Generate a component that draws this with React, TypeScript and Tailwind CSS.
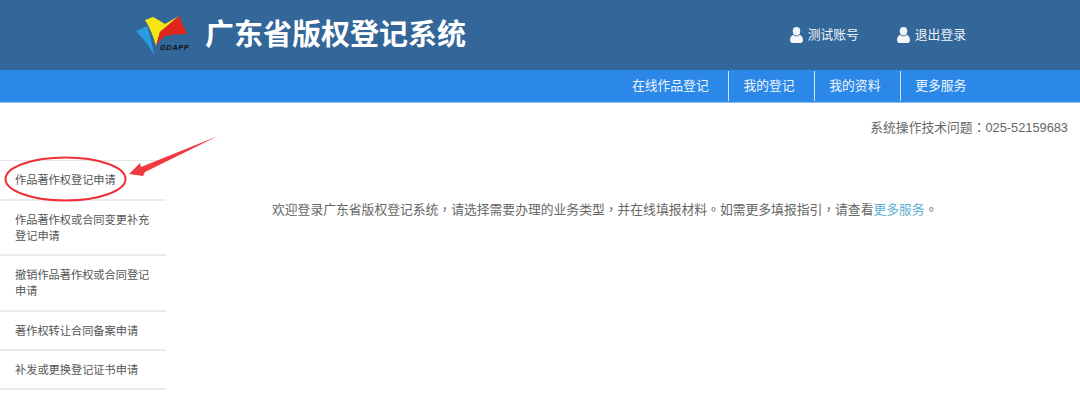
import React from 'react';

const navItems = ['在线作品登记', '我的登记', '我的资料', '更多服务'];

const menuItems = [
  { label: '作品著作权登记申请', h: 'h-[40px]' },
  { label: '作品著作权或合同变更补充登记申请', h: 'h-[55px]' },
  { label: '撤销作品著作权或合同登记申请', h: 'h-[56px]' },
  { label: '著作权转让合同备案申请', h: 'h-[39px]' },
  { label: '补发或更换登记证书申请', h: 'h-[39px]' },
];

// centred full-width punctuation, as in the reference
const P = ({ c }: { c: string }) => <span className="font-['Noto_Sans_CJK_TC',sans-serif]">{c}</span>;

const UserIcon = () => (
  <svg width="13" height="16" viewBox="0 0 13 16" className="shrink-0" fill="#f4f7fa">
    <ellipse cx="6.5" cy="4.2" rx="3.7" ry="4.2" />
    <path d="M0 13C0 10 1.6 8.4 3.4 7.8 4.2 8.8 5.3 9.3 6.5 9.3s2.3-.5 3.1-1.5C11.4 8.4 13 10 13 13 13 15 11.8 16 10.6 16H2.4C1.2 16 0 15 0 13Z" />
  </svg>
);

const Logo = () => (
  <svg width="54" height="42" viewBox="0 0 54 42" className="shrink-0">
    <path d="M0 16 L11 11 Q15 22 18 40 Q11 27 0 16Z" fill="#2a9be0" />
    <path d="M9 5 L17 2 Q23 5 29 9 L43 1 L24 17 L20 31 Q16 16 9 5Z" fill="#f7e414" />
    <path d="M20 31 L24 17 L43 1 L51 19 Q38 19 29 21 Q24 25 20 31Z" fill="#e0261c" />
    <text x="24" y="35" fontSize="7.5" fontWeight="700" fontStyle="italic" letterSpacing="0.5" fill="#10131a" fontFamily="'Liberation Sans', sans-serif">GDAPP</text>
  </svg>
);

const Markup = () => (
  <svg width="230" height="80" viewBox="0 130 230 80" className="absolute left-0 top-[130px] pointer-events-none">
    <ellipse cx="65.5" cy="179" rx="60" ry="21.5" fill="none" stroke="#ee2f35" strokeWidth="2" />
    <path d="M129 174 L140 163 L141 167 L218 136 L145 172 L143 176Z" fill="#f03a40" />
  </svg>
);

export default function App() {
  return (
    <div className="relative w-[1080px] h-[407px] overflow-hidden bg-white font-['Liberation_Sans','Noto_Sans_CJK_SC',sans-serif]">
      <header className="h-[70px] bg-[#336699] flex items-center">
        <div className="ml-[136px] mt-[2px]">
          <Logo />
        </div>
        <h1 className="ml-[15px] text-[29px] leading-none font-bold text-white">广东省版权登记系统</h1>
        <div className="ml-auto mr-[114px] flex gap-[38px] text-[12.8px] text-[#eef3f8]">
          <span className="flex items-center gap-[5px]"><UserIcon />测试账号</span>
          <span className="flex items-center gap-[5px]"><UserIcon />退出登录</span>
        </div>
      </header>

      <nav className="h-[33px] bg-[#2b88e8] border-b border-[#8fc0f2] flex justify-end pr-[94px] pt-px pb-px">
        {navItems.map((item, i) => (
          <a key={item} className={`flex items-center pl-[14px] pr-[19.7px] text-[12.8px] text-[#eef5fd] ${i > 0 ? 'border-l border-[#cfe3f9]' : ''}`}>
            {item}
          </a>
        ))}
      </nav>

      <div className="flex">
        <aside className="w-[166px] pt-[57px] shrink-0">
          <ul className="border-t border-[#e6e6e6]">
            {menuItems.map((m) => (
              <li key={m.label} className={`${m.h} flex items-center px-[15px] border-b-2 border-[#ebebeb] text-[11.2px] leading-[16px] text-[#555]`}>
                {m.label}
              </li>
            ))}
          </ul>
        </aside>
        <main className="flex-1 flex flex-col">
          <p className="pt-[16px] pr-[12px] text-right text-[12.8px] leading-[16px] text-[#666]">系统操作技术问题<P c="：" />025-52159683</p>
          <p className="mt-[65px] pl-[106px] text-[12.8px] leading-[16px] text-[#666]">
            欢迎登录广东省版权登记系统<P c="，" />请选择需要办理的业务类型<P c="，" />并在线填报材料<P c="。" />如需更多填报指引<P c="，" />请查看<a className="text-[#5fb0d0]">更多服务</a><P c="。" />
          </p>
        </main>
      </div>

      <Markup />
    </div>
  );
}
